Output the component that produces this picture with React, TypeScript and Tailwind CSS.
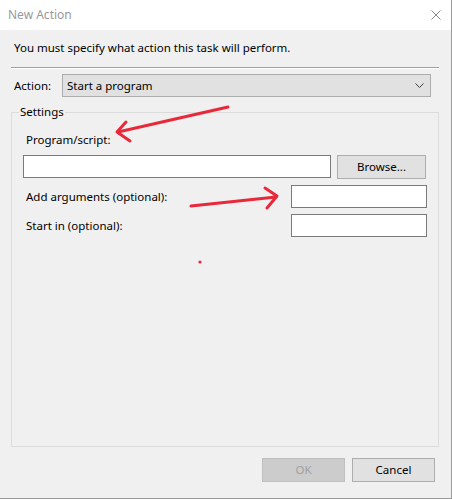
import type { ReactNode } from "react";

const FONT = "font-['Noto_Sans','Liberation_Sans',sans-serif]";

function WinButton({ children, disabled = false }: { children: ReactNode; disabled?: boolean }) {
  return (
    <button
      type="button"
      disabled={disabled}
      className={
        disabled
          ? "w-[83px] h-[24px] border border-[#bfbfbf] bg-[#cccccc] text-[#a0a0a0] text-[11.5px] leading-none"
          : "w-[83px] h-[24px] border border-[#adadad] bg-[#e1e1e1] text-black text-[11.5px] leading-none"
      }
    >
      {children}
    </button>
  );
}

function TextBox({ className }: { className: string }) {
  return <div className={"h-[23px] border border-[#7a7a7a] bg-white " + className} />;
}

export default function App() {
  return (
    <div className={`relative w-[452px] h-[499px] bg-[#f0f0f0] border-r border-b border-[#9a9a9a] text-[11.5px] text-black ${FONT}`}>
      {/* title bar */}
      <div className="h-[30px] bg-white flex items-center justify-between pl-[8px] pr-[10px]">
        <span className="text-[#999999] text-[12px] leading-4">New Action</span>
        <svg width="10" height="10" viewBox="0 0 10 10">
          <path d="M0.5 0.5 L9.5 9.5 M9.5 0.5 L0.5 9.5" stroke="#8a8a8a" strokeWidth="1" fill="none" />
        </svg>
      </div>

      <p className="mt-[10px] pl-[14px] leading-4">You must specify what action this task will perform.</p>

      <div className="mt-[11px] ml-[11px] w-[428px] border-t border-b border-t-[#a0a0a0] border-b-white" />

      {/* action row */}
      <div className="mt-[5px] flex items-center pl-[14px]">
        <span className="w-[48px] leading-4">Action:</span>
        <div className="w-[369px] h-[23px] border border-[#adadad] bg-[#e1e1e1] flex items-center justify-between pl-[4px] pr-[6px]">
          <span className="leading-4">Start a program</span>
          <svg width="9" height="5" viewBox="0 0 9 5">
            <path d="M0.5 0.5 L4.5 4.5 L8.5 0.5" stroke="#404040" strokeWidth="1" fill="none" />
          </svg>
        </div>
      </div>

      {/* settings group */}
      <fieldset className="mt-[7px] ml-[11px] w-[428px] h-[343px] border border-[#dcdcdc]">
        <legend className="ml-[7px] px-[1px] leading-4">Settings</legend>

        <div className="mt-[12px] pl-[14px] leading-4">Program/script:</div>
        <div className="mt-[7px] flex ml-[11px]">
          <TextBox className="w-[308px]" />
          <div className="ml-[6px]">
            <button
              type="button"
              className="w-[89px] h-[24px] border border-[#adadad] bg-[#e1e1e1] text-[11.5px] leading-none"
            >
              Browse...
            </button>
          </div>
        </div>

        <div className="mt-[6px] flex items-center justify-between pl-[14px] pr-[11px]">
          <span className="leading-4">Add arguments (optional):</span>
          <TextBox className="w-[136px]" />
        </div>
        <div className="mt-[6px] flex items-center justify-between pl-[14px] pr-[11px]">
          <span className="leading-4">Start in (optional):</span>
          <TextBox className="w-[136px]" />
        </div>
      </fieldset>

      {/* buttons */}
      <div className="mt-[11px] flex justify-end gap-[7px] pr-[16px]">
        <WinButton disabled>OK</WinButton>
        <WinButton>Cancel</WinButton>
      </div>

      {/* red annotations */}
      <svg
        className="absolute left-0 top-0 pointer-events-none"
        width="452"
        height="499"
        viewBox="0 0 452 499"
      >
        <g stroke="#e8293a" strokeWidth="3" strokeLinecap="round" strokeLinejoin="round" fill="none">
          <path d="M228 107 L118 132" />
          <path d="M126 122 L117 132 L130 141" />
          <path d="M191 206 L276 197" />
          <path d="M265 188 L277 196 L267 208" />
        </g>
        <circle cx="200" cy="262" r="1.6" fill="#e8293a" />
      </svg>
    </div>
  );
}
